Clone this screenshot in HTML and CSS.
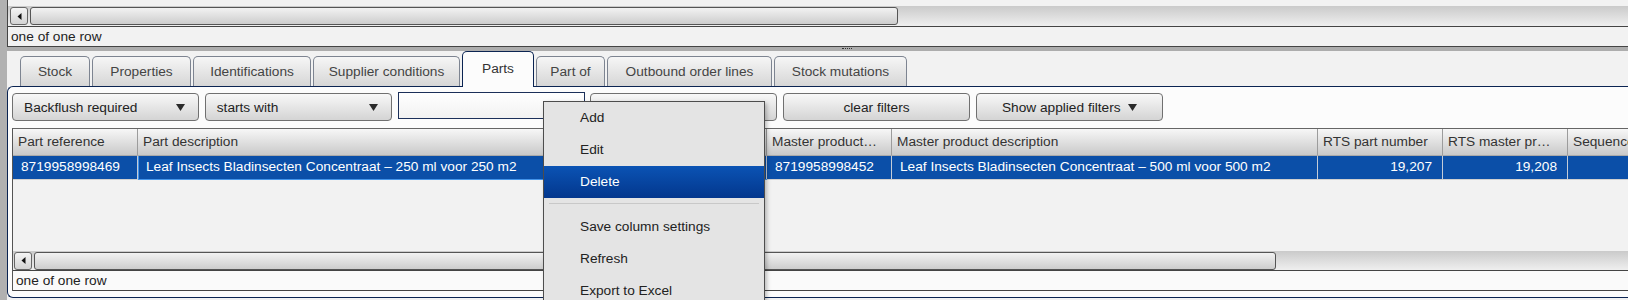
FILE: index.html
```html
<!DOCTYPE html>
<html lang="en">
<head>
    <meta charset="UTF-8">
    <meta name="viewport" content="width=device-width, initial-scale=1.0">
    <link rel="stylesheet" href="styles.css">
    <title>Stock - Parts</title>
</head>
<body>
    <div class="app">
        <!-- upper grid, only its bottom is visible -->
        <div class="top-pane">
            <div class="grid-tail"></div>
            <div class="hscroll">
                <div class="scroll-btn">
                    <svg width="5" height="7" viewBox="0 0 5 7"><path d="M4.5 0 L0.5 3.5 L4.5 7 Z" fill="#111"/></svg>
                </div>
                <div class="scroll-thumb"></div>
            </div>
            <div class="status">one of one row</div>
        </div>

        <div class="splitter"><span class="grip"></span></div>

        <div class="lower">
            <div class="tabs">
                <div class="tab">Stock</div>
                <div class="tab">Properties</div>
                <div class="tab">Identifications</div>
                <div class="tab">Supplier conditions</div>
                <div class="tab active">Parts</div>
                <div class="tab">Part of</div>
                <div class="tab">Outbound order lines</div>
                <div class="tab">Stock mutations</div>
            </div>

            <div class="panel">
                <!-- filter bar -->
                <div class="filters">
                    <div class="combo">
                        <span>Backflush required</span>
                        <svg width="9" height="7" viewBox="0 0 9 7"><path d="M0 0 H9 L4.5 7 Z" fill="#2a2a2a"/></svg>
                    </div>
                    <div class="combo">
                        <span>starts with</span>
                        <svg width="9" height="7" viewBox="0 0 9 7"><path d="M0 0 H9 L4.5 7 Z" fill="#2a2a2a"/></svg>
                    </div>
                    <div class="search"></div>
                    <div class="btn">apply filter</div>
                    <div class="btn">clear filters</div>
                    <div class="btn">
                        <span>Show applied filters</span>
                        <svg width="9" height="7" viewBox="0 0 9 7"><path d="M0 0 H9 L4.5 7 Z" fill="#2a2a2a"/></svg>
                    </div>
                </div>

                <!-- parts grid -->
                <div class="grid">
                    <div class="grid-head">
                        <div class="cell c-ref">Part reference</div>
                        <div class="cell c-desc">Part description</div>
                        <div class="cell c-ref">Master product…</div>
                        <div class="cell c-mdesc">Master product description</div>
                        <div class="cell c-ref">RTS part number</div>
                        <div class="cell c-ref">RTS master pr…</div>
                        <div class="cell c-last">Sequence</div>
                    </div>
                    <div class="grid-row selected">
                        <div class="cell c-ref">8719958998469</div>
                        <div class="cell c-desc focused">Leaf Insects Bladinsecten Concentraat – 250 ml voor 250 m2</div>
                        <div class="cell c-ref">8719958998452</div>
                        <div class="cell c-mdesc">Leaf Insects Bladinsecten Concentraat – 500 ml voor 500 m2</div>
                        <div class="cell c-ref num">19,207</div>
                        <div class="cell c-ref num">19,208</div>
                        <div class="cell c-last"></div>
                    </div>
                    <div class="grid-body"></div>
                    <div class="hscroll">
                        <div class="scroll-btn">
                            <svg width="5" height="7" viewBox="0 0 5 7"><path d="M4.5 0 L0.5 3.5 L4.5 7 Z" fill="#111"/></svg>
                        </div>
                        <div class="scroll-thumb"></div>
                    </div>
                    <div class="status">one of one row</div>
                </div>
            </div>
        </div>

        <!-- right click menu on the grid -->
        <div class="context-menu">
            <div class="menu-item">Add</div>
            <div class="menu-item">Edit</div>
            <div class="menu-item hover">Delete</div>
            <div class="menu-sep"></div>
            <div class="menu-item">Save column settings</div>
            <div class="menu-item">Refresh</div>
            <div class="menu-item">Export to Excel</div>
        </div>
    </div>
</body>
</html>
```

FILE: styles.css
```css
* {
  margin: 0;
  padding: 0;
  box-sizing: border-box;
}

body {
  font-family: 'Liberation Sans', Arial, sans-serif;
  font-size: 13.7px;
  color: #333;
  background-color: #f2f2f2;
}

.app {
  position: relative;
  height: 300px;
  overflow: hidden;
  border-left: 7px solid #b1b1b1;
}

/* upper pane */
.top-pane {
  border-left: 1px solid #444;
  border-bottom: 1px solid #444;
}

.grid-tail {
  height: 6px;
}

.hscroll {
  display: flex;
  align-items: center;
  height: 20px;
  padding-left: 2px;
  background: linear-gradient(#cacaca, #efefef);
}

.scroll-btn {
  width: 18px;
  height: 18px;
  display: flex;
  align-items: center;
  justify-content: center;
  border: 1px solid #666;
  border-radius: 3px;
  background: linear-gradient(#f5f5f5, #d3d3d3);
}

.scroll-thumb {
  width: 868px;
  height: 18px;
  margin-left: 2px;
  border: 1px solid #555;
  border-radius: 3px;
  background: linear-gradient(#f2f2f2, #cdcdcd);
}

.status {
  height: 20px;
  line-height: 19px;
  padding-left: 3px;
  border-top: 1px solid #444;
  color: #222;
}

.splitter {
  position: relative;
  height: 4px;
  background-color: #adadad;
}

.grip {
  position: absolute;
  left: 835px;
  top: 1px;
  width: 10px;
  border-top: 1px dotted #333;
}

/* tabs */
.tabs {
  display: flex;
  align-items: flex-end;
  gap: 2px;
  height: 35px;
  padding-left: 13px;
}

.tab {
  height: 30px;
  line-height: 30px;
  text-align: center;
  color: #444;
  border: 1px solid #7d8491;
  border-bottom: none;
  border-radius: 5px 5px 0 0;
  background: linear-gradient(#f6f6f6, #d6d6d6);
}

.tab:nth-child(1) { width: 70px; }
.tab:nth-child(2) { width: 99px; }
.tab:nth-child(3) { width: 118px; }
.tab:nth-child(4) { width: 147px; }
.tab:nth-child(5) { width: 72px; }
.tab:nth-child(6) { width: 69px; }
.tab:nth-child(7) { width: 165px; }
.tab:nth-child(8) { width: 133px; }

.tab.active {
  position: relative;
  z-index: 1;
  height: 36px;
  line-height: 33px;
  margin-bottom: -1px;
  color: #333;
  border-color: #0b2452;
  background: #fcfcfc;
}

/* panel */
.panel {
  height: 212px;
  padding: 6px 0 5px 4px;
  border: 1px solid #0b2452;
  border-right: none;
  border-radius: 6px 0 0 6px;
  background-color: #fcfcfc;
}

.filters {
  display: flex;
  gap: 5.75px;
  height: 28px;
}

.combo, .btn {
  width: 187px;
  height: 28px;
  display: flex;
  align-items: center;
  border: 1px solid #707070;
  border-radius: 4px;
  background: linear-gradient(#f8f8f8, #d4d4d4);
  color: #222;
}

.combo {
  justify-content: space-between;
  padding: 0 13px 0 11px;
}

.btn {
  justify-content: center;
  gap: 7px;
}

.search {
  width: 187px;
  height: 27px;
  margin-top: -1px;
  border: 1px solid #1c305a;
  background: linear-gradient(#ffffff, #f2f2f2);
}

/* grid */
.grid {
  margin-top: 7px;
  border-left: 1px solid #555;
  border-top: 1px solid #666;
  background-color: #f2f2f2;
}

.grid-head, .grid-row {
  display: flex;
  white-space: nowrap;
}

.grid-head {
  height: 27px;
  line-height: 26px;
  background: linear-gradient(#f7f7f7, #c9c9c9);
  border-bottom: 1px solid #aaa;
}

.cell {
  flex: none;
  overflow: hidden;
  padding-left: 5px;
  border-right: 1px solid #9c9c9c;
}

.c-ref { width: 125px; }
.c-desc { width: 629px; }
.c-mdesc { width: 426px; }
.c-last { flex: 1; border-right: none; }

.grid-row {
  height: 24px;
  line-height: 22px;
  border-bottom: 1px solid #d0d0d0;
}

.grid-row.selected {
  background-color: #0b4fa8;
  color: #fff;
}

.grid-row .cell {
  padding-left: 8px;
  border-right-color: #c4ccd8;
}

.grid-row .num {
  text-align: right;
  padding-right: 10px;
}

.cell.focused {
  position: relative;
  box-shadow: inset 1px 0 0 #4394ea, 0 1px 0 #4394ea;
}

.grid-body {
  height: 71px;
}

.grid .hscroll {
  height: 19px;
  padding-left: 1px;
}

.grid .scroll-thumb {
  width: 1242px;
  height: 18px;
}

.grid .status {
  height: 21px;
  line-height: 20px;
  border-bottom: 1px solid #444;
  background-color: #fafafa;
}

/* context menu */
.context-menu {
  position: absolute;
  left: 536px;
  top: 101px;
  width: 222px;
  height: 220px;
  border: 1px solid #4d4d4d;
  background-color: #e4e4e4;
  box-shadow: 2px 2px 4px rgba(0, 0, 0, 0.25);
  z-index: 5;
}

.menu-item {
  height: 32px;
  line-height: 32px;
  padding-left: 36px;
  color: #222;
}

.menu-item.hover {
  color: #fff;
  background: linear-gradient(#0b53b4, #03378d);
}

.menu-sep {
  height: 13px;
  margin: 0 5px;
  border-bottom: 7px solid #e4e4e4;
  background: linear-gradient(#e4e4e4 5px, #c8c8c8 5px, #c8c8c8 6px, #fafafa 6px);
}
```
